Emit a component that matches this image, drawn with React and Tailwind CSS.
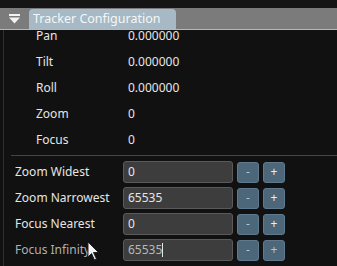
import React from "react";

const READOUTS = [
  { label: "Pan", value: "0.000000" },
  { label: "Tilt", value: "0.000000" },
  { label: "Roll", value: "0.000000" },
  { label: "Zoom", value: "0" },
  { label: "Focus", value: "0" },
];

const LIMITS = [
  { label: "Zoom Widest", value: "0" },
  { label: "Zoom Narrowest", value: "65535" },
  { label: "Focus Nearest", value: "0" },
  { label: "Focus Infinity", value: "65535", dim: true },
];

const StepButton = ({ children, dim }) => (
  <button
    className={
      "w-[22px] h-[21px] rounded-[3px] border border-[#5f7a8e] bg-[#4c667a] flex items-center justify-center text-[12px] leading-none " +
      (dim ? "text-[#b8c4cc]" : "text-[#e8eef2]")
    }
  >
    {children}
  </button>
);

const Cursor = () => (
  <svg
    className="absolute left-[87px] top-[241px]"
    width="14"
    height="20"
    viewBox="0 0 14 20"
  >
    <path
      d="M1 1 L1 16 L4.5 12.5 L7.5 19 L9.5 18 L6.5 11.5 L11.5 11.5 Z"
      fill="#f4f4f4"
      stroke="#222"
      strokeWidth="1"
    />
  </svg>
);

export default function App() {
  return (
    <div
      className="relative w-[337px] h-[266px] overflow-hidden bg-[#111111] text-[12px] text-[#e6e6e6]"
      style={{ fontFamily: '"Noto Sans", "Open Sans", sans-serif' }}
    >
      {/* top strip */}
      <div className="h-[8px] bg-[#151515]" />

      {/* header bar */}
      <div className="relative z-10 h-[22px] bg-[#7b7b7b] border-b border-[#a9bcc7] flex items-end">
        <div className="w-[29px] h-full flex items-center justify-center">
          <svg width="11" height="10" viewBox="0 0 11 10">
            <rect x="0" y="0" width="11" height="2" fill="#f2f2f2" />
            <path d="M0 3.5 L11 3.5 L5.5 9.5 Z" fill="#f2f2f2" />
          </svg>
        </div>
        <div className="h-[20px] w-[147px] bg-[#a6b9c4] rounded-t-[4px] pl-[4px] flex items-center text-[12.5px] text-[#f4f7f9] leading-none">
          Tracker Configuration
        </div>
      </div>

      <div className="flex">
        <div className="w-[4px] border-r border-[#2e2e2e] h-[236px]" />
        <div className="flex-1">
          {/* readouts */}
          <div className="mt-[-7px]">
            {READOUTS.map((r) => (
              <div key={r.label} className="h-[26px] flex items-center">
                <div className="w-[124px] pl-[32px]">{r.label}</div>
                <div>{r.value}</div>
              </div>
            ))}
          </div>

          <div className="ml-[7px] mt-[2px] border-t border-[#3b4650]" />

          {/* limits */}
          <div className="pt-[3px] pb-[4px]">
            {LIMITS.map((l) => (
              <div key={l.label} className="h-[26px] flex items-center">
                <div
                  className={
                    "w-[119px] pl-[11px] " + (l.dim ? "text-[#b0b0b0]" : "")
                  }
                >
                  {l.label}
                </div>
                <div
                  className={
                    "w-[110px] h-[22px] rounded-[3px] border border-[#5a5a5a] bg-[#3d3d3d] pl-[4px] flex items-center " +
                    (l.dim ? "text-[#b8b8b8]" : "")
                  }
                >
                  {l.value}
                  {l.dim && <span className="w-px h-[14px] bg-[#e6e6e6]" />}
                </div>
                <div className="ml-[4px] flex gap-[4px]">
                  <StepButton dim>-</StepButton>
                  <StepButton dim={l.dim}>+</StepButton>
                </div>
              </div>
            ))}
          </div>

          <div className="ml-[7px] border-t border-[#3b4650]" />
        </div>
      </div>

      <Cursor />
    </div>
  );
}
